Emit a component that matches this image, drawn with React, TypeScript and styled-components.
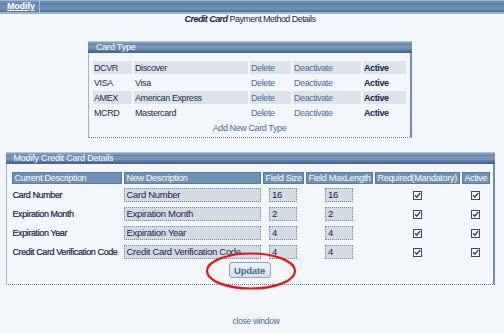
import React from "react";
import styled, { createGlobalStyle } from "styled-components";

const Global = createGlobalStyle`
  html, body { margin: 0; padding: 0; background: #f3f7fb; }
  body { font-family: "Liberation Sans", Arial, sans-serif; font-size: 9px; color: #1b2b4b; }
`;

const stripe = `linear-gradient(to bottom,
  #b9c6d6 0px, #b9c6d6 1px,
  #7f9cc0 1px, #7f9cc0 3px,
  #5f82ac 3px, #5f82ac 4px,
  #7494ba 4px, #7494ba 8px,
  #5a7ea8 8px, #5a7ea8 10px,
  #47688f 10px, #47688f 12px)`;

const Page = styled.div`
  width: 500px;
  min-height: 333px;
  display: flex;
  flex-direction: column;
  align-items: center;
`;

const TopBar = styled.div`
  width: 504px;
  align-self: flex-start;
  height: 14px;
  display: flex;
  background: linear-gradient(to bottom,
    #a5b8cf 0px, #a5b8cf 1px,
    #6f90b7 1px, #6f90b7 3px,
    #5b7fa9 3px, #5b7fa9 5px,
    #6d8db4 5px, #6d8db4 10px,
    #5578a2 10px, #5578a2 12px,
    #9fb2c9 12px, #9fb2c9 14px);
`;

const Tab = styled.div`
  width: 40px;
  height: 14px;
  box-sizing: border-box;
  border-right: 1px solid #a9bdd4;
  padding-left: 7px;
  color: #ffffff;
  font-weight: bold;
  font-size: 9px;
  line-height: 13px;
  letter-spacing: -0.2px;
  text-decoration: underline;
`;

const Title = styled.div`
  height: 12px;
  line-height: 11px;
  font-size: 9px;
  letter-spacing: -0.55px;
  color: #1b2b4b;
  b { font-style: italic; color: #14264a; }
`;

const Panel = styled.div<{ $w: number; $mt: number }>`
  width: ${(p) => p.$w}px;
  margin-top: ${(p) => p.$mt}px;
  display: flex;
  flex-direction: column;
`;

const PanelHeader = styled.div`
  height: 12px;
  background: ${stripe};
  color: #ffffff;
  font-size: 9px;
  line-height: 12px;
  padding-left: 8px;
  letter-spacing: -0.2px;
`;

const PanelBody = styled.div<{ $pad: string }>`
  border: 1px solid #9db3cc;
  border-right: 2px solid #6d8db5;
  border-top: none;
  border-bottom: 1px dotted #5e7fa8;
  padding: ${(p) => p.$pad};
  display: flex;
  flex-direction: column;
  align-items: center;
`;

const CardTable = styled.table`
  border-collapse: separate;
  border-spacing: 2px;
  table-layout: fixed;
  width: 317px;
  font-size: 9px;
  letter-spacing: -0.4px;
`;

const CardRow = styled.tr<{ $shade: boolean }>`
  td {
    height: 13px;
    padding: 0 0 0 1px;
    background: ${(p) => (p.$shade ? "#dce3eb" : "transparent")};
    white-space: nowrap;
  }
`;

const LinkCell = styled.td`
  color: #4b6c9b;
`;

const ActiveCell = styled.td`
  color: #15244a;
  font-weight: bold;
`;

const AddLink = styled.div`
  margin-top: 1px;
  color: #4b6c9b;
  font-size: 9px;
  letter-spacing: -0.4px;
  line-height: 12px;
`;

const DetailTable = styled.table`
  border-collapse: separate;
  border-spacing: 2px;
  table-layout: fixed;
  width: 482px;
  font-size: 9px;
  letter-spacing: -0.4px;
  align-self: flex-start;
`;

const HeadCell = styled.th`
  height: 12px;
  padding: 0 2px;
  box-sizing: border-box;
  background: #6f90b7;
  border: 1px solid #5a7ba3;
  color: #ffffff;
  font-weight: normal;
  text-align: left;
  white-space: nowrap;
  overflow: hidden;
  letter-spacing: -0.3px;
`;

const LabelCell = styled.td`
  height: 17px;
  padding: 0 0 0 1px;
  color: #15244a;
  letter-spacing: -0.4px;
  white-space: nowrap;
  -webkit-text-stroke: 0.2px #15244a;
`;

const CenterCell = styled.td<{ $align?: string }>`
  text-align: ${(p) => p.$align || "center"};
  padding: 0;
`;

const Field = styled.input<{ $w: number }>`
  width: ${(p) => p.$w}px;
  height: 14px;
  box-sizing: border-box;
  margin: 0;
  padding: 0 2px;
  border: 1px dotted #7a8a9c;
  background: #d3dbe4;
  font-family: "Liberation Sans", Arial, sans-serif;
  font-size: 9.5px;
  letter-spacing: -0.3px;
  color: #15244a;
  vertical-align: middle;
  outline: none;
`;

const Check = styled.span`
  display: inline-flex;
  width: 9px;
  height: 9px;
  box-sizing: border-box;
  border: 1px solid #3c4c66;
  background: #ffffff;
  align-items: center;
  justify-content: center;
  vertical-align: middle;
`;

const ButtonWrap = styled.div`
  position: relative;
  margin-top: 0;
  margin-bottom: 6px;
`;

const UpdateButton = styled.button`
  width: 42px;
  height: 16px;
  box-sizing: border-box;
  border: 1px solid #8ea4bf;
  border-radius: 3px;
  background: linear-gradient(#eef2f6, #d6dfe9);
  color: #4a6a96;
  font-family: "Liberation Sans", Arial, sans-serif;
  font-weight: bold;
  font-size: 9.5px;
  letter-spacing: -0.2px;
  padding: 0;
`;

const Ring = styled.svg`
  position: absolute;
  left: -24px;
  top: -11px;
  pointer-events: none;
`;

const CloseLink = styled.div`
  margin-top: 31px;
  margin-left: 12px;
  color: #4b6c9b;
  font-size: 8.5px;
  letter-spacing: -0.3px;
  line-height: 10px;
`;

const cards = [
  ["DCVR", "Discover"],
  ["VISA", "Visa"],
  ["AMEX", "American Express"],
  ["MCRD", "Mastercard"],
];

const fields = [
  ["Card Number", "Card Number", "16", "16"],
  ["Expiration Month", "Expiration Month", "2", "2"],
  ["Expiration Year", "Expiration Year", "4", "4"],
  ["Credit Card Verification Code", "Credit Card Verification Code", "4", "4"],
];

const Tick = () => (
  <svg width="7" height="7" viewBox="0 0 7 7">
    <path d="M1 3.2 L2.8 5.2 L6.2 1" fill="none" stroke="#1f3fa0" strokeWidth="1.4" />
  </svg>
);

const detailCols = [110, 137, 41, 67, 85, 28];

export default function App() {
  return (
    <>
      <Global />
      <Page>
        <TopBar>
          <Tab>Modify</Tab>
        </TopBar>
        <Title>
          <b>Credit Card</b> Payment Method Details
        </Title>

        <Panel $w={324} $mt={15}>
          <PanelHeader>Card Type</PanelHeader>
          <PanelBody $pad="6px 2px 3px 2px">
            <CardTable>
              <colgroup>
                <col style={{ width: 39 }} />
                <col style={{ width: 114 }} />
                <col style={{ width: 41 }} />
                <col style={{ width: 68 }} />
                <col style={{ width: 43 }} />
              </colgroup>
              <tbody>
                {cards.map(([code, name], i) => (
                  <CardRow key={code} $shade={i % 2 === 0}>
                    <td>{code}</td>
                    <td>{name}</td>
                    <LinkCell>Delete</LinkCell>
                    <LinkCell>Deactivate</LinkCell>
                    <ActiveCell>Active</ActiveCell>
                  </CardRow>
                ))}
              </tbody>
            </CardTable>
            <AddLink>Add New Card Type</AddLink>
          </PanelBody>
        </Panel>

        <Panel $w={489} $mt={14}>
          <PanelHeader>Modify Credit Card Details</PanelHeader>
          <PanelBody $pad="6px 3px 0 3px">
            <DetailTable>
              <colgroup>
                {detailCols.map((w, i) => (
                  <col key={i} style={{ width: w }} />
                ))}
              </colgroup>
              <thead>
                <tr>
                  <HeadCell>Current Description</HeadCell>
                  <HeadCell>New Description</HeadCell>
                  <HeadCell>Field Size</HeadCell>
                  <HeadCell>Field MaxLength</HeadCell>
                  <HeadCell>Required(Mandatory)</HeadCell>
                  <HeadCell>Active</HeadCell>
                </tr>
              </thead>
              <tbody>
                {fields.map(([label, val, size, max]) => (
                  <tr key={label}>
                    <LabelCell>{label}</LabelCell>
                    <CenterCell $align="left">
                      <Field $w={137} defaultValue={val} />
                    </CenterCell>
                    <CenterCell>
                      <Field $w={28} defaultValue={size} />
                    </CenterCell>
                    <CenterCell>
                      <Field $w={28} defaultValue={max} />
                    </CenterCell>
                    <CenterCell>
                      <Check>
                        <Tick />
                      </Check>
                    </CenterCell>
                    <CenterCell>
                      <Check>
                        <Tick />
                      </Check>
                    </CenterCell>
                  </tr>
                ))}
              </tbody>
            </DetailTable>
            <ButtonWrap>
              <UpdateButton>Update</UpdateButton>
              <Ring width="92" height="40" viewBox="0 0 92 40">
                <ellipse cx="46" cy="20" rx="44" ry="17.5" fill="none" stroke="#e01818" strokeWidth="2.2" />
              </Ring>
            </ButtonWrap>
          </PanelBody>
        </Panel>

        <CloseLink>close window</CloseLink>
      </Page>
    </>
  );
}
